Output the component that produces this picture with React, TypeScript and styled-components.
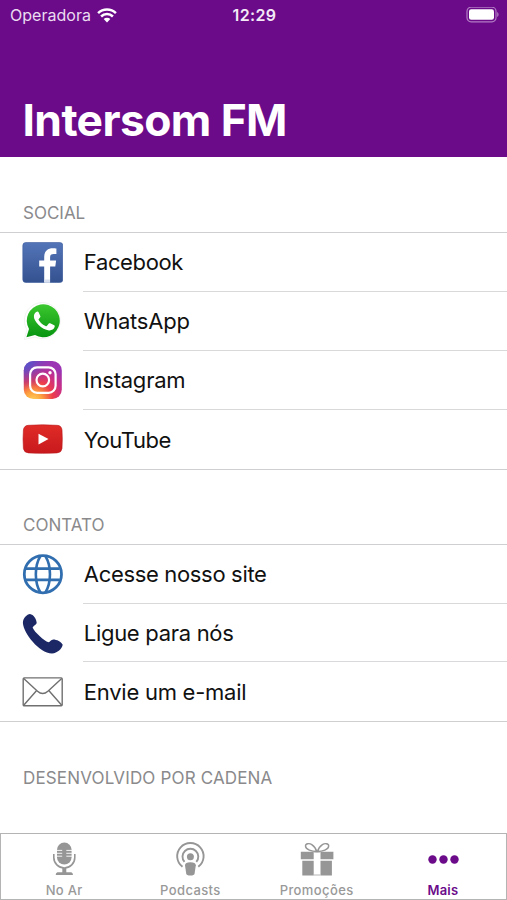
import React from "react";
import styled, { createGlobalStyle } from "styled-components";

const GlobalStyle = createGlobalStyle`
  * { box-sizing: border-box; }
  body { margin: 0; background: #fff; font-family: Inter, "Liberation Sans", sans-serif; }
`;

const Screen = styled.div`
  display: flex;
  flex-direction: column;
  width: 507px;
  height: 900px;
  overflow: hidden;
  background: #fff;
`;

const Header = styled.header`
  display: flex;
  flex-direction: column;
  justify-content: space-between;
  height: 157px;
  background: #6b0b8a;
  color: #fff;
`;

const StatusBar = styled.div`
  display: grid;
  grid-template-columns: 1fr auto 1fr;
  align-items: center;
  height: 30px;
  padding: 0 8px 0 10px;
  svg { display: block; }
`;

const Carrier = styled.div`
  display: flex;
  align-items: center;
  gap: 6px;
  font-size: 16px;
  line-height: 20px;
  letter-spacing: 0.02px;
  color: #eadcf0;
`;

const Clock = styled.div`
  font-size: 16px;
  line-height: 20px;
  font-weight: 600;
  letter-spacing: 0.35px;
  color: #f3e9f7;
`;

const Battery = styled.div`
  justify-self: end;
`;

const Title = styled.h1`
  margin: 0 0 9px 22.5px;
  font-size: 44.4px;
  line-height: 56px;
  font-weight: 700;
  letter-spacing: -0.6px;
  white-space: nowrap;
`;

const Section = styled.section``;

const SectionTitle = styled.h2<{ $spacing: number; $height: number }>`
  display: flex;
  align-items: flex-end;
  height: ${(p) => p.$height}px;
  margin: 0;
  padding: 0 0 8px 23px;
  font-size: 17px;
  line-height: 22px;
  font-weight: 400;
  letter-spacing: ${(p) => p.$spacing}px;
  color: #8a8a8c;
`;

const List = styled.ul<{ $height: number }>`
  display: flex;
  flex-direction: column;
  height: ${(p) => p.$height}px;
  margin: 0;
  padding: 0;
  list-style: none;
  border-top: 1px solid #cfcfd1;
  border-bottom: 1px solid #cfcfd1;
`;

const Row = styled.li`
  display: flex;
  flex: 1 1 0;
  padding-left: 22px;
  &:not(:last-child) > :last-child { border-bottom: 1px solid #d9d9db; }
`;

const IconBox = styled.span`
  display: flex;
  align-items: center;
  width: 61px;
  svg { display: block; }
`;

const Label = styled.span<{ $spacing: number }>`
  display: flex;
  flex: 1;
  align-items: center;
  padding-left: 0.8px;
  font-size: 22px;
  letter-spacing: ${(p) => p.$spacing}px;
  color: #111;
`;

const TabBar = styled.nav`
  display: grid;
  grid-template-columns: repeat(4, 1fr);
  height: 67px;
  margin-top: auto;
  border: 1px solid #b4b4b4;
`;

const Tab = styled.div<{ $active?: boolean; $spacing: number }>`
  display: flex;
  flex-direction: column;
  align-items: center;
  padding-top: 6px;
  font-size: 13px;
  line-height: 16px;
  font-weight: ${(p) => (p.$active ? 600 : 500)};
  letter-spacing: ${(p) => p.$spacing}px;
  color: ${(p) => (p.$active ? "#6b0b8a" : "#999")};
  svg { display: block; margin-bottom: 5px; }
`;

const FacebookIcon = () => (
  <svg width="41" height="41" viewBox="0 0 41 41">
    <defs>
      <linearGradient id="fb" x1="0" y1="0" x2="0" y2="1">
        <stop offset="0" stopColor="#5375b8" />
        <stop offset="1" stopColor="#34518f" />
      </linearGradient>
    </defs>
    <rect x="0.8" y="0.5" width="40" height="40" rx="3" fill="url(#fb)" stroke="#3c5c9e" strokeWidth="0.6" />
    <path d="M22.2 40.5V24.500h-5v-6h5v-3.2c0-6 3.400-9 8.600-9 1.700 0 2.700.1 3.600.2v5.600h-2.900c-2.400 0-3.400 1.200-3.400 3.200v3.200h6l-.8 6h-5.200v16z" fill="#fff" />
    <path d="M22.400 37.500h5.500v3h-5.500z" fill="#d5dff0" />
  </svg>
);

const WhatsAppIcon = () => (
  <svg width="41" height="41" viewBox="0 0 41 41">
    <defs>
      <linearGradient id="wa" x1="0" y1="0" x2="0" y2="1">
        <stop offset="0" stopColor="#3cc82f" />
        <stop offset="1" stopColor="#079410" />
      </linearGradient>
    </defs>
    <path d="M2.300 38.500 5 29A18 18 0 1 1 13 36Z" fill="#fff" stroke="#efefef" strokeWidth="0.8" />
    <path d="M4.400 36.300 7 28A16.500 16.500 0 1 1 13 34Z" fill="url(#wa)" />
    <path d="M14.2 11.100c.8-.7 2-.7 2.400.1l1.800 4c.3.800-.9 1.900-1.600 2.700-.4.500-.2.900.2 1.500 1.700 2.700 3.700 4.400 6.600 5.600.6.300 1 .2 1.400-.3l1.800-2.200c.4-.5.900-.4 1.400-.2l4 2c.6.300.7.800.4 1.800-.8 2.400-3.200 3.600-5.700 3.300-3.300-.4-7.400-2.300-10.500-5.700-2.800-3.100-4.700-5.700-4.500-8.700.1-1.700 1-3 2.300-3.900z" fill="#fff" />
  </svg>
);

const InstagramIcon = () => (
  <svg width="41" height="41" viewBox="0 0 41 41">
    <defs>
      <radialGradient id="ig" cx="0.25" cy="1.05" r="1.05">
        <stop offset="0" stopColor="#ffd25a" />
        <stop offset="0.23" stopColor="#fda13e" />
        <stop offset="0.5" stopColor="#ed3e4b" />
        <stop offset="0.75" stopColor="#ca2f87" />
        <stop offset="1" stopColor="#9b35b3" />
      </radialGradient>
      <radialGradient id="igBlue" cx="0" cy="0" r="0.75">
        <stop offset="0" stopColor="#4a5bd3" />
        <stop offset="0.35" stopColor="#5851ca" stopOpacity="0.75" />
        <stop offset="1" stopColor="#8036ba" stopOpacity="0" />
      </radialGradient>
    </defs>
    <rect x="1.800" y="1" width="38" height="38" rx="9.500" fill="url(#ig)" />
    <rect x="1.800" y="1" width="38" height="38" rx="9.500" fill="url(#igBlue)" />
    <g fill="none" stroke="#fff" strokeWidth="2.200">
      <rect x="8.100" y="7.300" width="25.500" height="25.500" rx="7" />
      <circle cx="20.800" cy="20" r="6.300" />
    </g>
    <circle cx="28" cy="12.800" r="1.700" fill="#fff" />
  </svg>
);

const YouTubeIcon = () => (
  <svg width="41" height="41" viewBox="0 0 41 41">
    <defs>
      <linearGradient id="yt" x1="0" y1="0" x2="0" y2="1">
        <stop offset="0" stopColor="#e02c27" />
        <stop offset="1" stopColor="#c8191d" />
      </linearGradient>
    </defs>
    <path d="M6.500 6.300Q20.500 5.300 35 6.300Q39.500 6.500 40 11Q40.600 20 40 29.500Q39.500 33.700 35 33.900Q20.500 34.800 6.500 33.900Q2 33.700 1.400 29.500Q.7 20 1.400 11Q2 6.500 6.500 6.300Z" fill="url(#yt)" stroke="#b9171b" strokeWidth="0.6" />
    <path d="M16.500 14.700 26.500 20.100 16.500 25.500Z" fill="#fff" />
  </svg>
);

const GlobeIcon = () => (
  <svg width="41" height="41" viewBox="0 0 41 41" fill="none" stroke="#316eaf" strokeWidth="2.800">
    <circle cx="20.900" cy="20.200" r="18.600" />
    <path d="M4 14.600h33.800M4 25.900h33.800" strokeWidth="2.600" />
    <path d="M18.400 2C12.300 12 12.300 28.500 18.400 38.500M23.400 2c6.100 10 6.100 26.500 0 36.500" strokeWidth="2.600" />
  </svg>
);

const PhoneIcon = () => (
  <svg width="41" height="41" viewBox="0 0 41 41">
    <path d="M8 .9C5 1.200.9 5 .9 10C1.500 20 17 40 30 40.600C35.500 40 40 36 40.700 31.800C39.500 28.700 34.500 26.500 31.300 26.500C28.800 26.700 28.300 29 26.500 29.200C22 27.800 12.500 19 10.700 14.700C10.900 12.700 14.500 12 14.700 9.700C14.500 6 11.500 1.500 8 .9Z" fill="#1c2866" />
  </svg>
);

const MailIcon = () => (
  <svg width="41" height="41" viewBox="0 0 41 41" fill="none" stroke="#707070" strokeWidth="1.400">
    <rect x="1.200" y="6.900" width="39" height="27.900" rx="1" />
    <path d="M1.700 7.500 15.500 20.200q5.200 4.600 10.400 0L39.700 7.500M1.700 34.300 14.200 20M39.700 34.300 27.200 20" />
  </svg>
);

const WifiIcon = () => (
  <svg width="20" height="15" viewBox="0 0 20 15">
    <g fill="none" stroke="#fff" strokeWidth="2.500">
      <path d="M1.100 5.200a12.600 12.600 0 0 1 17.800 0M4.100 8.500a8.300 8.300 0 0 1 11.800 0" />
    </g>
    <path d="M6.700 11.100a4.700 4.700 0 0 1 6.600 0L10 14.500z" fill="#fff" />
  </svg>
);

const BatteryIcon = () => (
  <svg width="33" height="16" viewBox="0 0 33 16">
    <rect x="1" y="0.200" width="29" height="14.600" rx="4" fill="none" stroke="#b27cc3" strokeWidth="1.200" />
    <rect x="3" y="2.300" width="25" height="10.400" rx="2.200" fill="#fff" />
    <path d="M31.200 5c1.800.8 1.800 4.200 0 5z" fill="#b27cc3" />
  </svg>
);

const MicIcon = () => (
  <svg width="38" height="37" viewBox="0 0 38 37">
    <path d="M12 9.800a7.300 7.300 0 0 1 14.600 0v7.500a7.300 7.300 0 0 1-14.600 0z" fill="#969696" />
    <path d="M11.500 10.400h5.700M11.500 13.300h5.700M11.500 16.200h5.700M21.300 10.400H27M21.300 13.300H27M21.300 16.200H27" stroke="#fff" strokeWidth="0.900" />
    <path d="M8.800 14v3.500a10.500 10.500 0 0 0 21 0V14" fill="none" stroke="#969696" strokeWidth="1.600" />
    <path d="M17.300 28h4v4.300h5q1.700.5 1.700 2.700H10.700q0-2.200 1.700-2.700h4.900z" fill="#969696" />
  </svg>
);

const PodcastIcon = () => (
  <svg width="38" height="37" viewBox="0 0 38 37">
    <g fill="none" stroke="#969696" strokeWidth="1.900">
      <path d="M11.500 26.800a13.200 13.200 0 1 1 15.800 0" />
      <path d="M13.500 21.900a7.900 7.900 0 1 1 11.800 0" />
    </g>
    <circle cx="19.400" cy="16.700" r="3.500" fill="#969696" />
    <path d="M14 25.200q0-3 5.400-3t5.400 3L23.600 33.500q-.3 2-4.200 2t-4.200-2z" fill="#969696" />
  </svg>
);

const GiftIcon = () => (
  <svg width="38" height="37" viewBox="0 0 38 37">
    <path d="M2.800 11.700h12.900v7.500H2.800zM22.500 11.700h12.900v7.500H22.500zM4.300 20.700h11.400V35.500H4.300zM22.500 20.700h11.400V35.500H22.500z" fill="#969696" />
    <path d="M15.500 12.100h7M15.500 35h7" stroke="#b5b5b5" strokeWidth="1" />
    <path d="M18.700 11.500C14 11.500 7.500 9.500 7.500 6c0-2.700 4-3 6.300-1.400S18 8.500 18.700 11.500zM19.500 11.500c4.700 0 11.200-2 11.200-5.500 0-2.700-4-3-6.300-1.400S20.200 8.500 19.500 11.500z" fill="none" stroke="#969696" strokeWidth="1.400" />
  </svg>
);

const MoreIcon = () => (
  <svg width="38" height="37" viewBox="0 0 38 37" fill="#6b0b8a">
    <circle cx="8.500" cy="19.500" r="4.200" />
    <circle cx="19.500" cy="19.500" r="4.200" />
    <circle cx="30.500" cy="19.500" r="4.200" />
  </svg>
);

const social = [
  { label: "Facebook", icon: <FacebookIcon />, spacing: -0.36 },
  { label: "WhatsApp", icon: <WhatsAppIcon />, spacing: -0.24 },
  { label: "Instagram", icon: <InstagramIcon />, spacing: -0.22 },
  { label: "YouTube", icon: <YouTubeIcon />, spacing: -0.45 },
];

const contact = [
  { label: "Acesse nosso site", icon: <GlobeIcon />, spacing: -0.33 },
  { label: "Ligue para nós", icon: <PhoneIcon />, spacing: -0.3 },
  { label: "Envie um e-mail", icon: <MailIcon />, spacing: -0.25 },
];

const tabs = [
  { label: "No Ar", icon: <MicIcon />, spacing: 0.3 },
  { label: "Podcasts", icon: <PodcastIcon />, spacing: 0.38 },
  { label: "Promoções", icon: <GiftIcon />, spacing: 0.4 },
  { label: "Mais", icon: <MoreIcon />, active: true, spacing: 0.2 },
];

const renderRows = (items: typeof social) =>
  items.map((item) => (
    <Row key={item.label}>
      <IconBox>{item.icon}</IconBox>
      <Label $spacing={item.spacing}>{item.label}</Label>
    </Row>
  ));

export default function App() {
  return (
    <Screen>
      <GlobalStyle />
      <Header>
        <StatusBar>
          <Carrier>Operadora <WifiIcon /></Carrier>
          <Clock>12:29</Clock>
          <Battery><BatteryIcon /></Battery>
        </StatusBar>
        <Title>Intersom FM</Title>
      </Header>
      <Section>
        <SectionTitle $height={75} $spacing={0}>SOCIAL</SectionTitle>
        <List $height={238}>{renderRows(social)}</List>
      </Section>
      <Section>
        <SectionTitle $height={74} $spacing={0}>CONTATO</SectionTitle>
        <List $height={178}>{renderRows(contact)}</List>
      </Section>
      <Section>
        <SectionTitle $height={75} $spacing={0.16}>DESENVOLVIDO POR CADENA</SectionTitle>
      </Section>
      <TabBar>
        {tabs.map((tab) => (
          <Tab key={tab.label} $active={tab.active} $spacing={tab.spacing}>
            {tab.icon}
            {tab.label}
          </Tab>
        ))}
      </TabBar>
    </Screen>
  );
}
